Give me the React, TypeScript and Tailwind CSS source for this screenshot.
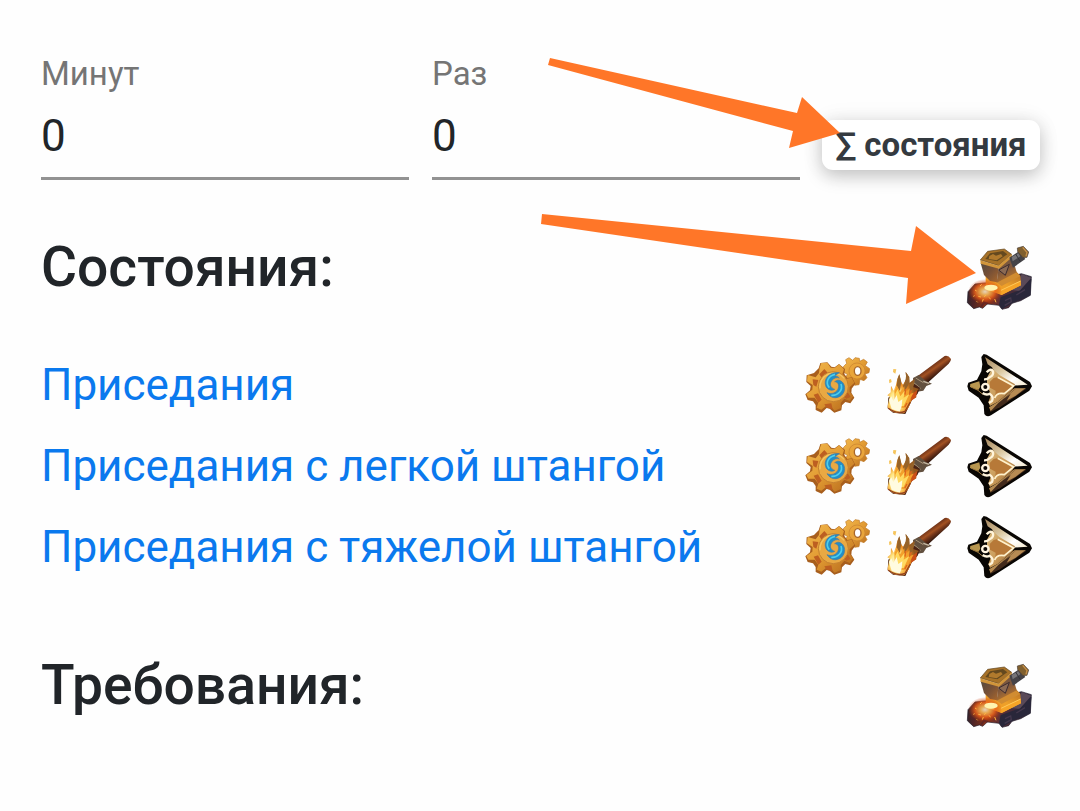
import type { ReactNode } from "react";

function AnvilIcon() {
  return (
    <svg viewBox="33 30 198 198" className="block size-[66px] shrink-0" aria-hidden="true">
      <defs>
        <linearGradient id="anvil-base" x1="0" x2="1">
          <stop offset="0" stopColor="#33232c" />
          <stop offset=".3" stopColor="#8c3016" />
          <stop offset=".52" stopColor="#5a3037" />
          <stop offset="1" stopColor="#29263c" />
        </linearGradient>
        <linearGradient id="anvil-face" x1="0" y1="0" x2="1" y2="1">
          <stop offset="0" stopColor="#54493f" />
          <stop offset=".5" stopColor="#775036" />
          <stop offset="1" stopColor="#a9682d" />
        </linearGradient>
        <linearGradient id="anvil-side" x1="0" y1="0" x2=".4" y2="1">
          <stop offset="0" stopColor="#6c5546" />
          <stop offset=".6" stopColor="#80583c" />
          <stop offset="1" stopColor="#b8752c" />
        </linearGradient>
        <linearGradient id="anvil-collar" x1="0" y1="1" x2="1" y2="0">
          <stop offset="0" stopColor="#f79a1c" />
          <stop offset=".5" stopColor="#eda02a" />
          <stop offset="1" stopColor="#b56f24" />
        </linearGradient>
        <radialGradient id="anvil-glow">
          <stop offset="0" stopColor="#fffbe0" />
          <stop offset=".28" stopColor="#ffc257" />
          <stop offset=".6" stopColor="#ec6119" />
          <stop offset="1" stopColor="#be310b" stopOpacity="0" />
        </radialGradient>
      </defs>
      <path d="M60 147L39 170L37 203L56 221L73 216L83 220L97 207L132 211L141 223L161 218L171 205L197 197L226 181L229 125L199 116L99 143Z" fill="url(#anvil-base)" stroke="#211b28" strokeWidth="2" />
      <path d="M110 159L194 168L229 128L200 117L186 150L145 157Z" fill="#5a4a58" />
      <path d="M137 186L196 166L229 131L226 181L174 203L141 223L132 210Z" fill="#29273a" />
      <path d="M150 197L167 189L169 200L149 211M184 180L210 164" fill="none" stroke="#44384d" strokeWidth="4" />
      <path d="M92 112L122 138L182 108L196 122L198 151L140 180L92 160Z" fill="url(#anvil-collar)" />
      <path d="M122 140L182 112L196 123L140 153Z" fill="#d18c31" />
      <path d="M102 151L138 165L197 137L198 151L140 180L96 164Z" fill="#f6a427" />
      <path d="M138 166L197 138" stroke="#ffc958" strokeWidth="3" />
      <path d="M77 84L131 96L126 142L105 138L87 120Z" fill="url(#anvil-face)" />
      <path d="M131 96L170 61L185 112L125 143Z" fill="url(#anvil-side)" />
      <path d="M76 75L98 49L148 42L170 58L131 92Z" fill="#a77228" stroke="#5c421f" strokeWidth="2" />
      <path d="M91 72L105 55L144 48L157 58L127 79Z" fill="#64491f" />
      <path d="M103 63L114 57L123 62L138 57L143 64L125 76L101 72Z" fill="#b07a2d" />
      <path d="M76 76L130 92L170 58L171 67L132 101L77 86Z" fill="#d1953a" />
      <path d="M131 105L163 88L151 121Z" fill="#8b6a54" stroke="#3c2c30" strokeWidth="3" />
      <path d="M163 68L193 48L211 72L174 98Z" fill="#454347" />
      <path d="M170 66L190 55L196 64L173 79" fill="#767477" />
      <path d="M182 57L196 80" stroke="#34343a" strokeWidth="3" />
      <path d="M187 39L205 34L221 51L216 67L204 68L188 50Z" fill="#80602f" stroke="#4b4038" strokeWidth="2" />
      <path d="M203 37L216 52L213 64" fill="none" stroke="#c9924a" strokeWidth="4" />
      <ellipse cx="90" cy="170" rx="51" ry="38" fill="url(#anvil-glow)" opacity=".8" />
      <ellipse cx="108" cy="158" rx="20" ry="9" fill="#fff3af" />
      <path d="M75 153l5-5M60 165l5 3M70 184l8 2M82 200l3-8M101 187l6 5M119 192l4 10M65 199l3 3M93 180l-6 5M55 184l4-2" stroke="#ffb443" strokeWidth="3" />
      <path d="M42 190L57 199L53 213M78 216L87 203L99 206" fill="none" stroke="#502229" strokeWidth="6" opacity=".6" />
    </svg>
  );
}

function GearsIcon() {
  return (
    <svg viewBox="27 24 198 198" className="block size-[66px] shrink-0" aria-hidden="true">
      <defs>
        <linearGradient id="gear-gold" x1="0" y1="0" x2="1" y2="1">
          <stop offset="0" stopColor="#f2b84d" />
          <stop offset=".5" stopColor="#e19a32" />
          <stop offset="1" stopColor="#b2661b" />
        </linearGradient>
      </defs>
      <path d="M155 55L152 44L162 38L173 46L180 38L193 40L194 49L206 43L217 51L211 62L224 71L222 83L210 87L216 98L207 107L195 103L192 119L179 121L174 109L161 111L151 99L157 88L145 81L145 65Z" fill="url(#gear-gold)" stroke="#bf7a29" strokeWidth="2" />
      <circle cx="186" cy="78" r="24" fill="#e9a53b" stroke="#c98230" strokeWidth="2" />
      <ellipse cx="188" cy="78" rx="10" ry="13" fill="#fff" stroke="#a8672a" strokeWidth="4" />
      <path d="M71 70L76 54L97 52L109 65L119 67L132 57L150 72L148 87L157 99L171 97L181 116L170 131L169 143L178 158L166 175L151 171L141 181L139 196L118 203L104 191L95 189L80 203L62 195L62 180L54 169L38 165L31 148L45 136L47 123L34 111L35 91L57 84Z" fill="#a85f1e" />
      <path d="M74 68L79 54L97 53L107 68L119 69L132 58L147 73L142 88L152 102L170 98L178 113L164 127L164 140L175 154L164 168L148 161L137 174L138 189L119 197L106 183L94 182L79 194L65 188L70 173L59 158L40 158L34 147L52 134L53 120L36 109L38 90L62 97L72 84Z" fill="url(#gear-gold)" />
      <path d="M73 88L88 72L98 83L80 98ZM53 103L70 105L64 125L55 120ZM142 91L153 104L144 117L132 94ZM56 149L69 145L80 164L70 173ZM88 178L109 175L113 192L95 188ZM146 155L156 139L167 156L154 161Z" fill="#bd5f21" />
      <circle cx="115" cy="125" r="45" fill="#e9a943" stroke="#c58130" strokeWidth="3" />
      <path d="M75 130A41 41 0 0 1 148 100" fill="none" stroke="#f5c560" strokeWidth="4" />
      <path d="M133 83C103 79 83 103 93 125C98 134 110 139 119 133C106 129 103 116 110 107C116 99 126 96 133 99C128 94 122 92 119 92Z" fill="#218fc6" stroke="#4779a1" strokeWidth="2" />
      <path d="M119 110C127 110 133 117 130 129C126 144 109 149 96 143C106 159 123 163 138 152C154 139 152 115 136 107C130 104 124 106 119 110Z" fill="#218ec8" stroke="#4779a1" strokeWidth="2" />
      <path d="M120 88C97 93 91 115 103 128M138 117C145 136 128 153 109 151" fill="none" stroke="#50cdea" strokeWidth="5" />
    </svg>
  );
}

function TorchIcon() {
  return (
    <svg viewBox="30 24 198 198" className="block size-[66px] shrink-0" aria-hidden="true">
      <defs>
        <linearGradient id="torch-wood" gradientUnits="userSpaceOnUse" x1="165" y1="65" x2="184" y2="92">
          <stop offset="0" stopColor="#713419" />
          <stop offset=".35" stopColor="#a35222" />
          <stop offset=".6" stopColor="#75371a" />
          <stop offset="1" stopColor="#34190f" />
        </linearGradient>
        <radialGradient id="torch-heat" cx=".3" cy=".68" r=".6">
          <stop offset="0" stopColor="#fffff0" />
          <stop offset=".35" stopColor="#ffe783" />
          <stop offset=".65" stopColor="#ee9023" />
          <stop offset="1" stopColor="#94571d" />
        </radialGradient>
      </defs>
      <path d="M127 94L209 33Q220 30 228 42Q228 50 221 56L160 112L139 125Z" fill="url(#torch-wood)" />
      <path d="M114 99L131 90L153 108L171 116L154 123L145 137L117 142Z" fill="#62503f" />
      <path d="M122 99L145 113M114 111L137 130" stroke="#a99578" strokeWidth="3" />
      <path d="M145 109L162 115" stroke="#c8baa4" strokeWidth="4" />
      <path d="M40 158L52 147L118 117L135 128L128 146L112 163L91 207L54 203L38 190Z" fill="#4b2415" />
      <path d="M38 183L44 155L37 151L47 142L48 122L56 137L63 120L67 101L73 88L78 110L84 119L94 102L92 81L103 96L104 113L118 102L114 126L132 132L122 140L124 157L110 165L101 187L88 204Q56 209 38 188Z" fill="url(#torch-heat)" />
      <path d="M65 122Q68 99 73 88L79 111L74 138ZM84 122Q96 104 92 81Q108 99 100 119L88 142ZM104 119L120 103L114 130L103 148Z" fill="#96632a" />
      <path d="M110 148L127 135L123 157L108 168Z" fill="#cc4e16" />
      <path d="M58 138L66 122L75 142L88 124L89 145L104 130L102 148L116 143L98 174L86 190L60 182Z" fill="#f3a02b" />
      <path d="M61 146L68 133L76 154L89 137L86 158L103 147L86 183L61 183Z" fill="#ffda61" />
      <path d="M42 165L49 154L55 168L65 150L70 171L82 163L80 184L74 200L50 192Z" fill="#fffbe0" />
      <path d="M92 132L90 149M109 135L103 149M96 174L89 187" stroke="#dc651b" strokeWidth="4" />
      <path d="M55 72L64 73L61 86L54 81ZM42 104L48 102L50 111L43 115Z" fill="#f6c55d" />
      <path d="M40 190Q66 209 90 199L106 171" fill="none" stroke="#91401d" strokeWidth="4" />
    </svg>
  );
}

function ArrowheadIcon() {
  return (
    <svg viewBox="33 24 198 198" className="block size-[66px] shrink-0" aria-hidden="true">
      <defs>
        <linearGradient id="head-light" x1="0" y1="0" x2="1" y2="1">
          <stop offset="0" stopColor="#a5865d" />
          <stop offset=".45" stopColor="#ddcba5" />
          <stop offset=".72" stopColor="#fff" />
          <stop offset="1" stopColor="#f4e8cb" />
        </linearGradient>
        <linearGradient id="head-gold" x1="0" y1="0" x2="1" y2="1">
          <stop offset="0" stopColor="#d9b87d" />
          <stop offset=".55" stopColor="#c99a58" />
          <stop offset="1" stopColor="#80502b" />
        </linearGradient>
      </defs>
      <path d="M86 27L95 29L225 111L231 124L223 137L108 211Q95 218 88 207L86 181L71 158L41 137L37 124L40 113L66 104L79 79L82 58L79 36Z" fill="#090603" />
      <path d="M90 36L218 119L174 122L128 97L111 67L98 58Z" fill="url(#head-light)" />
      <path d="M111 70L132 89L180 118L172 134L128 171L105 183L100 172L108 150L96 119L96 98Z" fill="url(#head-gold)" />
      <path d="M116 99L132 95L174 122L144 146L121 153L122 137L105 128L104 111Z" fill="#b77938" />
      <path d="M128 97L176 123L148 146Q125 142 119 159" fill="none" stroke="#fff2cd" strokeWidth="5" />
      <path d="M213 130L107 199L102 187L128 171L178 130Z" fill="#b58a50" />
      <path d="M130 174L104 202L135 187L213 132L181 132Z" fill="#422a1b" />
      <path d="M145 163L167 146L155 167L182 152L209 131L182 131Z" fill="#b78b53" />
      <path d="M46 117L73 109L76 125L70 135L45 126Z" fill="#b8964f" />
      <path d="M48 126L69 136L83 148" fill="none" stroke="#9e7940" strokeWidth="3" />
      <path d="M95 82Q107 68 114 79Q117 90 105 96Q97 104 87 103M83 144Q94 152 104 146Q117 155 111 168L102 174" fill="none" stroke="#fff4db" strokeWidth="7" />
      <circle cx="91" cy="126" r="13" fill="#fff4df" />
      <circle cx="91" cy="126" r="6" fill="#0d0805" />
    </svg>
  );
}

function Field({ label, value }: { label: string; value: string }) {
  return (
    <div className="flex h-[130px] w-[368px] flex-col border-b-[3px] border-[#929292]">
      <span className="h-12 text-[33px] leading-[48px] text-[#757575]">{label}</span>
      <span className="mt-[9px] text-[44px] leading-[58px] text-[#212529]">{value}</span>
    </div>
  );
}

function SectionTitle({ children }: { children: ReactNode }) {
  return (
    <div className="flex h-[66px] items-start justify-between">
      <h2 className="-mt-[11px] text-[55.2px] leading-[66px] font-medium text-[#212529]">{children}</h2>
      <AnvilIcon />
    </div>
  );
}

const exercises = ["Приседания", "Приседания с легкой штангой", "Приседания с тяжелой штангой"];

export default function App() {
  return (
    <main className="relative h-[811px] w-[1080px] overflow-hidden bg-[#fefefe] pt-[50px] pr-12 pl-[41px] font-['Roboto',sans-serif]">
      <div className="-mr-2 flex items-start">
        <Field label="Минут" value="0" />
        <div className="ml-[23px]">
          <Field label="Раз" value="0" />
        </div>
        <button className="mt-[70px] ml-[22px] flex h-[50px] w-[218px] shrink-0 items-center justify-center rounded-[11px] bg-white pb-0.5 text-[33px] leading-none font-bold whitespace-nowrap text-[#343a40] shadow-[0_6px_18px_rgba(0,0,0,0.22),0_0_24px_rgba(0,0,0,0.06)]">
          ∑ состояния
        </button>
      </div>
      <section className="mt-[65px]">
        <SectionTitle>Состояния:</SectionTitle>
        <ul className="mt-[42px] flex flex-col gap-[15px]">
          {exercises.map((name) => (
            <li key={name} className="flex h-[66px] items-start justify-between">
              <a className="-mt-px text-[44px] leading-[66px] whitespace-nowrap text-[#0a79ee]">{name}</a>
              <div className="flex gap-[15px]">
                <GearsIcon />
                <TorchIcon />
                <ArrowheadIcon />
              </div>
            </li>
          ))}
        </ul>
      </section>
      <section className="mt-[82px]">
        <SectionTitle>Требования:</SectionTitle>
      </section>
      <svg viewBox="0 0 1080 811" className="pointer-events-none absolute inset-0 size-full" aria-hidden="true">
        <path d="M550 58L797 113L802 97L840 133L789 148L793 131L548 65Z" fill="#ff7628" />
        <path d="M542 214L911 251L916 226L976 273L906 304L908 278L541 224Z" fill="#ff7628" />
      </svg>
    </main>
  );
}
